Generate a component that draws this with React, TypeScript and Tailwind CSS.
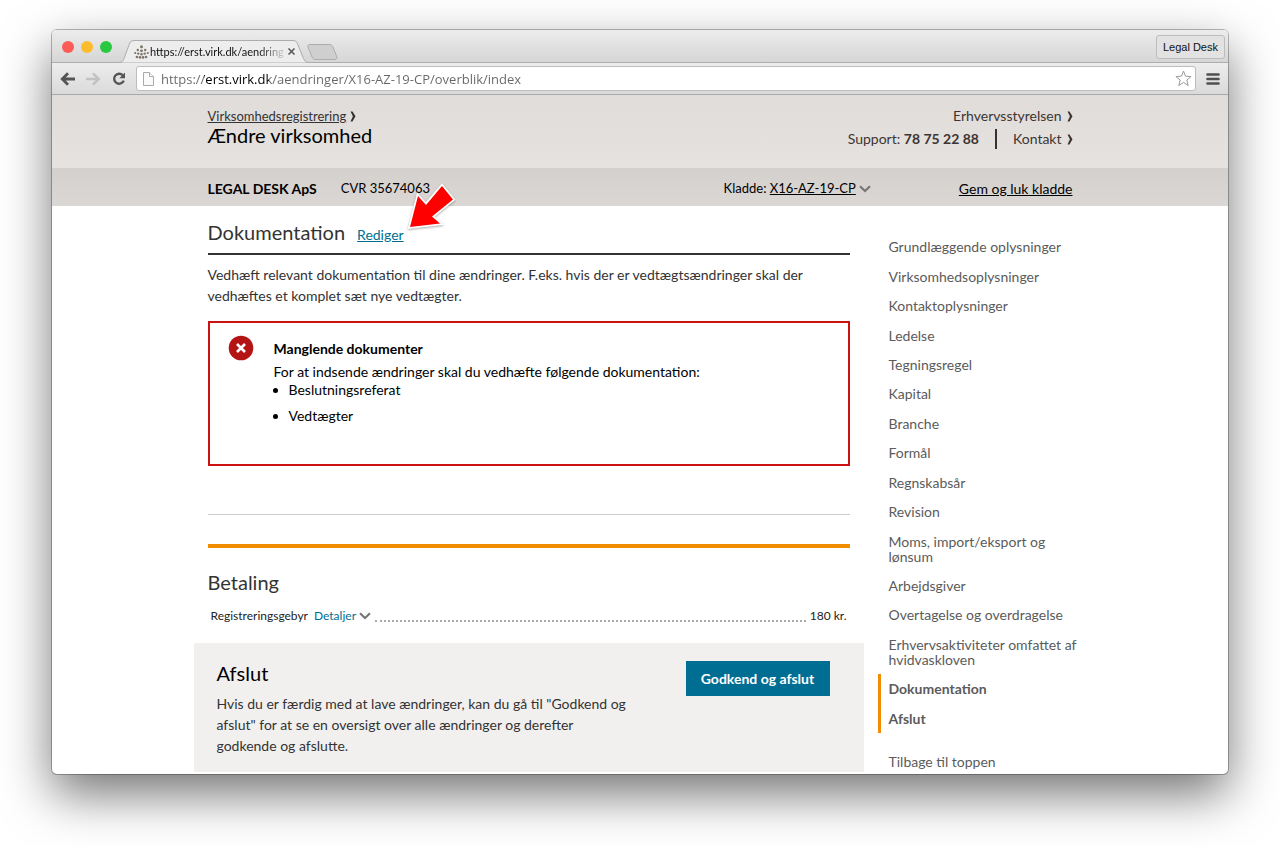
import React from "react";

interface NavItem {
  label: string;
  active?: boolean;
}

const navItems: NavItem[] = [
  { label: "Grundlæggende oplysninger" },
  { label: "Virksomhedsoplysninger" },
  { label: "Kontaktoplysninger" },
  { label: "Ledelse" },
  { label: "Tegningsregel" },
  { label: "Kapital" },
  { label: "Branche" },
  { label: "Formål" },
  { label: "Regnskabsår" },
  { label: "Revision" },
  { label: "Moms, import/eksport og lønsum" },
  { label: "Arbejdsgiver" },
  { label: "Overtagelse og overdragelse" },
  { label: "Erhvervsaktiviteter omfattet af hvidvaskloven" },
  { label: "Dokumentation", active: true },
  { label: "Afslut", active: true },
];

const missingDocuments = ["Beslutningsreferat", "Vedtægter"];

const ChevronRight: React.FC = () => (
  <svg width="6" height="11" viewBox="0 0 6 11" className="shrink-0">
    <path d="M0.5 0.5h2L5.5 5.2 2.5 10.5h-2L2.9 5.2z" fill="currentColor" />
  </svg>
);

const ChevronDown: React.FC = () => (
  <svg width="12" height="8" viewBox="0 0 12 8" fill="none" className="shrink-0">
    <path d="M1 1.2l5 4.8 5-4.8" stroke="#777" strokeWidth="2.2" />
  </svg>
);

const Favicon: React.FC = () => (
  <svg width="15" height="14" viewBox="0 0 15 14" fill="#7d7467" className="shrink-0">
    <circle cx="7.5" cy="1.8" r="1.5" />
    <circle cx="3.8" cy="5" r="1.2" />
    <circle cx="11.2" cy="5" r="1.2" />
    <circle cx="7.5" cy="5.8" r="1.4" />
    <circle cx="1.2" cy="8" r="1.1" />
    <circle cx="13.8" cy="8" r="1.1" />
    <circle cx="4.3" cy="8.6" r="1.2" />
    <circle cx="7.5" cy="9.2" r="1.2" />
    <circle cx="10.7" cy="8.6" r="1.2" />
    <circle cx="2.9" cy="12" r="1.3" />
    <circle cx="6" cy="12.4" r="1.3" />
    <circle cx="9.1" cy="12.4" r="1.3" />
    <circle cx="12.1" cy="12" r="1.3" />
  </svg>
);

const TabBar: React.FC = () => (
  <div className="flex h-[33px] items-end rounded-t-[4px] border-b border-[#adadad] bg-linear-to-b from-[#ececec] to-[#d6d6d6]">
    <div className="flex gap-[7px] self-start pt-[11px] pl-[10px]">
      <span className="size-3 rounded-full bg-[#fc5b57]" />
      <span className="size-3 rounded-full bg-[#fdbc2e]" />
      <span className="size-3 rounded-full bg-[#28c840]" />
    </div>
    <div className="relative -mb-px ml-[7px] flex h-[23px] w-[194px] items-center pl-[15px]">
      <svg width="194" height="23" viewBox="0 0 194 23" className="absolute inset-0">
        <path
          d="M0 22.5C3 22.5 4 21 5 18.5L10 5C11 2 12 0.5 15 0.5H174C177 0.5 178 2 179 5L184.5 18.5C185.5 21 187 22.5 190 22.5"
          fill="#ededed"
          stroke="#adadad"
        />
      </svg>
      <span className="relative flex items-center">
        <Favicon />
        <span className="ml-px w-[134px] bg-[linear-gradient(90deg,#111_108px,#11111100_138px)] bg-clip-text text-[11px] leading-4 whitespace-nowrap text-transparent">
          https://erst.virk.dk/aendring
        </span>
        <button aria-label="Luk fane" className="ml-1">
          <svg width="7" height="7" viewBox="0 0 7 7" stroke="#555" strokeWidth="1.5">
            <path d="M0.5 0.5l6 6M6.5 0.5l-6 6" />
          </svg>
        </button>
      </span>
    </div>
    <button aria-label="Ny fane" className="-ml-[6px] self-end pb-[2px]">
      <svg width="31" height="16" viewBox="0 0 31 16">
        <path
          d="M3 0.5H22C24 0.5 25 1 26 3L29.5 12C30.2 14 30 15.5 28 15.5H9C7 15.5 6 15 5 13L1 3C0.5 1.5 1 0.5 3 0.5z"
          fill="#cfcfcf"
          stroke="#adadad"
        />
      </svg>
    </button>
    <button className="mr-[3px] mb-[3px] ml-auto h-6 rounded-[3px] border border-[#bcbcbc] bg-[#e2e2e2] px-[6px] font-['Liberation_Sans',sans-serif] text-[11px] text-[#111]">
      Legal Desk
    </button>
  </div>
);

const Toolbar: React.FC = () => (
  <div className="flex h-8 items-center border-b border-[#a9a9a9] bg-linear-to-b from-[#ededed] to-[#dadada] pl-2">
    <button aria-label="Tilbage">
      <svg width="16" height="14" viewBox="0 0 16 14" fill="none" stroke="#555" strokeWidth="2.8">
        <path d="M15 7H3M8 1.3L2.3 7 8 12.7" />
      </svg>
    </button>
    <button aria-label="Frem" className="ml-[9px]">
      <svg width="16" height="14" viewBox="0 0 16 14" fill="none" stroke="#c2c2c2" strokeWidth="2.6">
        <path d="M1 7h12M8 1.3L13.7 7 8 12.7" />
      </svg>
    </button>
    <button aria-label="Genindlæs" className="ml-[11px]">
      <svg width="14" height="14" viewBox="0 0 14 14">
        <path d="M10.8 3.3A5 5 0 1 0 11.8 8.6" fill="none" stroke="#555" strokeWidth="2.4" />
        <path d="M13 0.5V6.2H7.3z" fill="#555" />
      </svg>
    </button>
    <div className="ml-[10px] flex h-[25px] flex-1 items-center rounded-[3px] border border-[#bdbdbd] bg-white pr-[3px] pl-[6px]">
      <svg width="11" height="14" viewBox="0 0 11 14" fill="#fafafa" stroke="#aaa">
        <path d="M0.5 0.5h6l4 4v9h-10z" />
        <path d="M6.5 0.5v4h4" />
      </svg>
      <input
        aria-label="Adresse"
        defaultValue="https://erst.virk.dk/aendringer/X16-AZ-19-CP/overblik/index"
        className="ml-[7px] min-w-0 flex-1 bg-[linear-gradient(90deg,#666_43px,#000_43px,#000_108px,#666_108px)] bg-clip-text font-['Open_Sans',sans-serif] text-[13px] leading-5 text-transparent outline-none"
      />
      <svg width="17" height="17" viewBox="0 0 17 17" fill="none" stroke="#999">
        <path d="M8.5 1l2 5.200 5.600.3-4.300 3.500 1.400 5.500-4.700-3.100-4.700 3.100 1.400-5.500L.9 6.500l5.600-.3z" />
      </svg>
    </div>
    <button aria-label="Menu" className="mr-2 ml-[10px]">
      <svg width="14" height="12" viewBox="0 0 14 12" stroke="#505050" strokeWidth="2.6" strokeLinecap="round">
        <path d="M1.5 1.5h11M1.5 6h11M1.5 10.5h11" />
      </svg>
    </button>
  </div>
);

const SiteHeader: React.FC = () => (
  <header>
    <div className="bg-linear-to-b from-[#e0dcd9] to-[#e6e2df]">
      <div className="mx-auto flex h-[73px] max-w-[865px] justify-between pt-3">
        <div>
          <a href="#" className="flex items-center gap-1 text-[13px] leading-[18px] text-[#333]">
            <span className="underline">Virksomhedsregistrering</span>
            <ChevronRight />
          </a>
          <h1 className="text-[20px] leading-5 text-black">Ændre virksomhed</h1>
        </div>
        <div className="flex flex-col items-end text-sm leading-[18px] text-[#3d3532]">
          <a href="#" className="flex items-center gap-[5px]">
            Erhvervsstyrelsen
            <ChevronRight />
          </a>
          <div className="mt-1 flex items-center">
            <span>
              Support: <b>78 75 22 88</b>
            </span>
            <span className="mx-4 h-5 w-[2px] bg-[#333]" />
            <a href="#" className="flex items-center gap-[5px]">
              Kontakt
              <ChevronRight />
            </a>
          </div>
        </div>
      </div>
    </div>
    <div className="bg-linear-to-b from-[#d4d0cd] to-[#dbd7d4]">
      <div className="mx-auto flex h-[38px] max-w-[865px] items-center pt-1 text-[13px] text-black">
        <b className="text-sm">LEGAL DESK ApS</b>
        <span className="ml-6">CVR 35674063</span>
        <span className="mr-[88px] ml-auto flex items-center gap-[3px]">
          <span>
            Kladde:{" "}
            <a href="#" className="underline">
              X16-AZ-19-CP
            </a>
          </span>
          <ChevronDown />
        </span>
        <a href="#" className="text-sm underline">
          Gem og luk kladde
        </a>
      </div>
    </div>
  </header>
);

const MissingDocumentsAlert: React.FC = () => (
  <div className="mt-[15px] flex h-[145px] border-2 border-[#cc1111] pt-3 pl-[18px] text-sm text-black">
    <svg width="26" height="26" viewBox="0 0 26 26" className="shrink-0">
      <circle cx="13" cy="13" r="12.3" fill="#b51414" />
      <path d="M9 9l8 8M17 9l-8 8" stroke="#fff" strokeWidth="2.6" />
    </svg>
    <div className="ml-5">
      <h3 className="mt-[3px] leading-[21px] font-bold">Manglende dokumenter</h3>
      <p className="mt-1 leading-[18px]">
        For at indsende ændringer skal du vedhæfte følgende dokumentation:
      </p>
      <ul className="list-disc space-y-2 pl-[15px] leading-[18px]">
        {missingDocuments.map((doc) => (
          <li key={doc}>{doc}</li>
        ))}
      </ul>
    </div>
  </div>
);

const Payment: React.FC = () => (
  <section>
    <h2 className="mt-5 text-[20px] leading-7 text-[#333]">Betaling</h2>
    <div className="mt-3 flex items-center px-[3px] text-xs leading-4 text-[#222]">
      <span>Registreringsgebyr</span>
      <button className="ml-[6px] flex items-center gap-[3px] text-[#006e93]">
        Detaljer
        <ChevronDown />
      </button>
      <span className="mx-1 h-3 flex-1 border-b-2 border-dotted border-[#aaa]" />
      <span>180 kr.</span>
    </div>
  </section>
);

const FinishPanel: React.FC = () => (
  <section className="-mx-[14px] mt-[19px] mb-[2px] flex items-start justify-between bg-[#f2f0ee] pt-[18px] pr-[34px] pb-4 pl-[23px]">
    <div>
      <h2 className="text-[20px] leading-6 text-black">Afslut</h2>
      <p className="mt-2 max-w-[410px] text-sm leading-[21px] text-[#333]">
        Hvis du er færdig med at lave ændringer, kan du gå til "Godkend og afslut" for at se en
        oversigt over alle ændringer og derefter godkende og afslutte.
      </p>
    </div>
    <button className="h-[35px] w-36 shrink-0 bg-[#006e93] text-sm font-bold text-white">
      Godkend og afslut
    </button>
  </section>
);

const SideNav: React.FC = () => (
  <nav className="-mr-2 ml-[28px] w-[203px] shrink-0 pt-[26px] text-sm leading-[15px] text-[#5b5b5b]">
    <ul className="flex h-[501px] flex-col">
      {navItems.map((item) => (
        <li
          key={item.label}
          className={
            item.active
              ? "flex grow items-center border-l-3 border-[#f28c00] pl-2 font-bold"
              : "flex grow items-center pl-[11px]"
          }
        >
          <a href="#">{item.label}</a>
        </li>
      ))}
    </ul>
    <a href="#" className="mt-[21px] block pl-[11px]">
      Tilbage til toppen
    </a>
  </nav>
);

// Red pointer laid over the edit link
const Pointer: React.FC = () => (
  <svg
    width="52"
    height="50"
    viewBox="0 0 52 50"
    className="absolute -top-6 left-[198px] drop-shadow-[0_1px_1px_#00000055]"
  >
    <path
      d="M4 45L12 14L20 23L36 4L47 17.5L26 34.5L34 41.5z"
      fill="#fe0000"
      stroke="#fff"
      strokeWidth="3.5"
      paintOrder="stroke"
    />
  </svg>
);

const App: React.FC = () => {
  return (
    <div className="bg-white px-13 pt-[30px] pb-[72px] font-['Lato',sans-serif]">
      <div className="rounded-[5px] bg-white shadow-[0_0_0_1px_#00000044,0_20px_50px_#0000008c]">
        <TabBar />
        <Toolbar />
        <SiteHeader />
        <div className="mx-auto flex max-w-[865px]">
          <main className="min-w-0 flex-1">
            <div className="relative flex items-baseline border-b-2 border-[#333] pt-3 pb-[7px]">
              <h2 className="text-[20px] leading-7 text-[#333]">Dokumentation</h2>
              <a href="#" className="ml-3 text-sm text-[#006e93] underline">
                Rediger
              </a>
              <Pointer />
            </div>
            <p className="mt-[9px] text-sm leading-[21px] text-[#333]">
              Vedhæft relevant dokumentation til dine ændringer. F.eks. hvis der er
              vedtægtsændringer skal der vedhæftes et komplet sæt nye vedtægter.
            </p>
            <MissingDocumentsAlert />
            <hr className="mt-12 border-[#ccc]" />
            <div className="mt-[29px] h-1 bg-[#f28c00]" />
            <Payment />
            <FinishPanel />
          </main>
          <SideNav />
        </div>
      </div>
    </div>
  );
};

export default App;
